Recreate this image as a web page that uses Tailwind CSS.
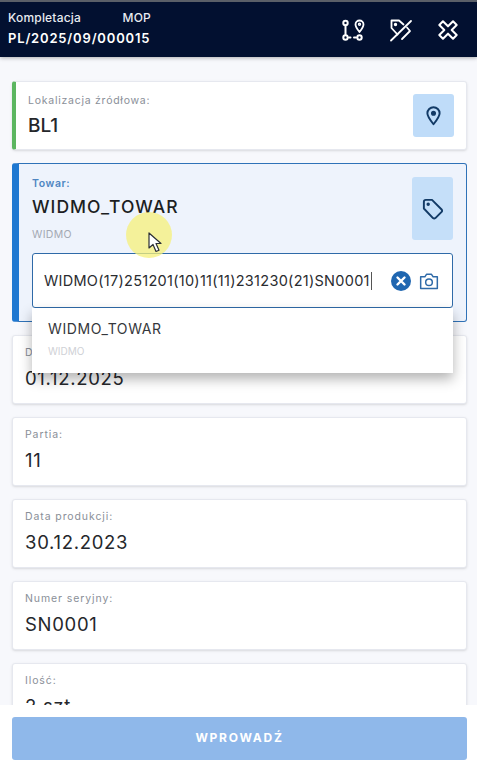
<!DOCTYPE html>
<html lang="pl">

<head>
    <meta charset="UTF-8">
    <meta name="viewport" content="width=device-width, initial-scale=1.0">
    <title>Kompletacja</title>
    <script src="https://cdn.jsdelivr.net/npm/@tailwindcss/browser@4"></script>
</head>

<body class="bg-[#f7f8fc] font-['Inter',sans-serif] overflow-hidden">
    <div class="relative flex flex-col h-[771px] w-[477px] overflow-hidden">
        <!-- Header -->
        <header class="shrink-0 h-[57px] bg-[#021030] border-t-2 border-[#5a5f68] shadow-[0_1px_4px_rgba(0,0,0,0.3)] flex items-center justify-between pl-2 pr-[18px] z-10">
            <div class="w-[143px] leading-[21px] pb-[3px]">
                <div class="flex justify-between text-[12px] font-medium tracking-[0.2px] text-[#e8ebf0]"><span>Kompletacja</span><span>MOP</span></div>
                <div class="text-[13px] font-semibold tracking-[0.82px] text-white">PL/2025/09/000015</div>
            </div>
            <div class="flex items-center gap-[24px]">
                <svg class="w-[24px] h-[24px]" viewBox="0 0 24 24" fill="none" stroke="#fff" stroke-width="2" stroke-linecap="round" stroke-linejoin="round">
                    <circle cx="4.500" cy="5" r="2.200"/><circle cx="4.500" cy="19.500" r="2.200"/><circle cx="18.500" cy="19.500" r="2.200"/>
                    <path d="M4.500 7.500v9.500M8 19.500h1.500M13 19.500h2"/>
                    <path d="M18.500 14c-2.400-3-4-5-4-7.500a4 4 0 0 1 8 0c0 2.500-1.600 4.500-4 7.500z" stroke-width="1.800"/>
                    <circle cx="18.500" cy="6.300" r="0.700"/>
                </svg>
                <svg class="w-[24px] h-[24px]" viewBox="0 0 24 24" fill="none" stroke="#fff" stroke-width="1.800" stroke-linecap="round" stroke-linejoin="round">
                    <path d="M2.500 2.500H10l4.500 4M2.500 2.500V10l6 6.500M13 21l8-8-3-3.500"/>
                    <circle cx="6.500" cy="6.500" r="0.800"/>
                    <path d="M2 22.500 22 3"/>
                </svg>
                <svg class="w-[22px] h-[22px]" viewBox="0 0 24 24" fill="none" stroke="#fff" stroke-width="2.200" stroke-linejoin="round">
                    <path d="M6.500 2.500 12 8l5.500-5.500 4 4L16 12l5.500 5.500-4 4L12 16l-5.500 5.500-4-4L8 12 2.500 6.500z"/>
                </svg>
            </div>
        </header>

        <!-- Form -->
        <main class="flex-1 min-h-0 overflow-hidden pl-3 pr-[10px] pt-[24px] flex flex-col gap-[13px]">
            <!-- Source location -->
            <section class="shrink-0 h-[69px] bg-white rounded-[3px] border border-[#e6e8ef] border-l-[4px] border-l-[#5cb660] flex items-center justify-between pl-3 pr-3 shadow-sm">
                <div>
                    <div class="text-[10.5px] tracking-[0.75px] text-[#8a8f98] leading-[14px]">Lokalizacja źródłowa:</div>
                    <div class="text-[19px] font-medium text-[#25272b] leading-[24px] mt-[6px]">BL1</div>
                </div>
                <div class="w-[41px] h-[43px] rounded-[3px] bg-[#bfdcf9] flex items-center justify-center">
                    <svg class="w-[21px] h-[21px]" viewBox="0 0 24 24" fill="none" stroke="#123a66" stroke-width="2.200" stroke-linejoin="round">
                        <path d="M12 22c-4.500-5.500-7-9-7-12.500a7 7 0 0 1 14 0C19 13 16.500 16.500 12 22z"/>
                        <circle cx="12" cy="9.500" r="1.800" fill="#123a66"/>
                    </svg>
                </div>
            </section>

            <!-- Active product card -->
            <section class="shrink-0 h-[159px] bg-[#eef3fc] rounded-[3px] border border-[#2f72b8] border-l-[7px] border-l-[#1f78d1] pl-[13px] pr-[13px] pt-[13px]">
                <div class="flex justify-between h-[76px]">
                    <div>
                        <div class="text-[10.5px] font-semibold tracking-[0.6px] text-[#4f86c2] leading-[14px]">Towar:</div>
                        <div class="text-[17.5px] font-medium text-[#1c1e22] leading-[24px] mt-[4px] tracking-[1.05px]">WIDMO_TOWAR</div>
                        <div class="text-[10.5px] text-[#a4a9b3] leading-[14px] mt-[9px] tracking-[0.3px]">WIDMO</div>
                    </div>
                    <div class="w-[41px] h-[63px] rounded-[3px] bg-[#c5dff9] flex items-center justify-center">
                        <svg class="w-[23px] h-[23px]" viewBox="0 0 24 24" fill="none" stroke="#123a66" stroke-width="2" stroke-linejoin="round">
                            <path d="M3 5a2 2 0 0 1 2-2h6.500L21.500 13a2 2 0 0 1 0 2.500L15 22a2 2 0 0 1-2.500 0L3 12z"/>
                            <circle cx="7.500" cy="7.500" r="0.800" fill="#123a66"/>
                        </svg>
                    </div>
                </div>

                <!-- Scan input with suggestions -->
                <div class="relative">
                    <div class="h-[55px] bg-white rounded-[3px] border border-[#2f6aa8] flex items-center justify-between pl-[11px] pr-[13px]">
                        <span class="text-[14.5px] text-[#2a2c30] border-r border-[#555] pr-px leading-[18px] tracking-[0.28px]">WIDMO(17)251201(10)11(11)231230(21)SN0001</span>
                        <div class="flex items-center gap-[8px]">
                            <svg class="w-[20px] h-[20px]" viewBox="0 0 20 20">
                                <circle cx="10" cy="10" r="10" fill="#1f66b0"/>
                                <path d="M6.500 6.500l7 7M13.500 6.500l-7 7" stroke="#fff" stroke-width="2.400" stroke-linecap="round"/>
                            </svg>
                            <svg class="w-[20px] h-[20px]" viewBox="0 0 24 24" fill="none" stroke="#2f6aa8" stroke-width="1.800" stroke-linejoin="round">
                                <path d="M2 7h5l2-3h6l2 3h5v14H2z"/>
                                <circle cx="12" cy="13.500" r="4"/>
                            </svg>
                        </div>
                    </div>
                    <div class="absolute left-0 right-0 top-[55px] h-[65px] bg-white shadow-[0_6px_12px_rgba(0,0,0,0.3)] pl-4 pt-[11px] z-10">
                        <div class="text-[14px] text-[#35373b] leading-[20px] tracking-[0.6px]">WIDMO_TOWAR</div>
                        <div class="text-[10px] text-[#cfd1d6] leading-[14px] mt-[5px]">WIDMO</div>
                    </div>
                </div>
            </section>

            <!-- Read-only fields -->
            <section class="shrink-0 h-[69px] bg-white rounded-[3px] border border-[#e6e8ef] pl-3 pt-[10px] shadow-sm">
                <div class="text-[10.5px] tracking-[0.9px] text-[#8a8f98] leading-[14px]">Data ważności:</div>
                <div class="text-[18.5px] text-[#25272b] leading-[24px] mt-[6px] tracking-[0.7px]">01.12.2025</div>
            </section>
            <section class="shrink-0 h-[69px] bg-white rounded-[3px] border border-[#e6e8ef] pl-3 pt-[10px] shadow-sm">
                <div class="text-[10.5px] tracking-[0.9px] text-[#8a8f98] leading-[14px]">Partia:</div>
                <div class="text-[18.5px] text-[#25272b] leading-[24px] mt-[6px] tracking-[0.7px]">11</div>
            </section>
            <section class="shrink-0 h-[69px] bg-white rounded-[3px] border border-[#e6e8ef] pl-3 pt-[10px] shadow-sm">
                <div class="text-[10.5px] tracking-[0.9px] text-[#8a8f98] leading-[14px]">Data produkcji:</div>
                <div class="text-[18.5px] text-[#25272b] leading-[24px] mt-[6px] tracking-[0.7px]">30.12.2023</div>
            </section>
            <section class="shrink-0 h-[69px] bg-white rounded-[3px] border border-[#e6e8ef] pl-3 pt-[10px] shadow-sm">
                <div class="text-[10.5px] tracking-[0.9px] text-[#8a8f98] leading-[14px]">Numer seryjny:</div>
                <div class="text-[18.5px] text-[#25272b] leading-[24px] mt-[6px] tracking-[0.7px]">SN0001</div>
            </section>
            <section class="shrink-0 h-[69px] bg-white rounded-[3px] border border-[#e6e8ef] pl-3 pt-[10px] shadow-sm">
                <div class="text-[10.5px] tracking-[0.9px] text-[#8a8f98] leading-[14px]">Ilość:</div>
                <div class="text-[18.5px] text-[#25272b] leading-[24px] mt-[6px] tracking-[0.7px]">2 szt</div>
            </section>
        </main>

        <!-- Footer action -->
        <footer class="shrink-0 h-[66px] bg-white pl-3 pr-[10px] pt-3 z-10">
            <button class="w-full h-[43px] pb-[2px] rounded-[3px] bg-[#8fb8ea] text-white text-[12px] font-bold tracking-[1.75px]">WPROWADŹ</button>
        </footer>

        <!-- Recorded mouse pointer -->
        <div class="absolute left-[126px] top-[212px] w-[46px] h-[46px] rounded-full bg-[#f6f07a]/75 z-20"></div>
        <svg class="absolute left-[148px] top-[232px] w-[14px] h-[21px] z-20" viewBox="0 0 14 21">
            <path d="M1 1v15l4-3.500 3 7 3-1.300-3-6.700h5z" fill="#fff" stroke="#2b2f36" stroke-width="1.200" stroke-linejoin="round"/>
        </svg>
    </div>
</body>

</html>
